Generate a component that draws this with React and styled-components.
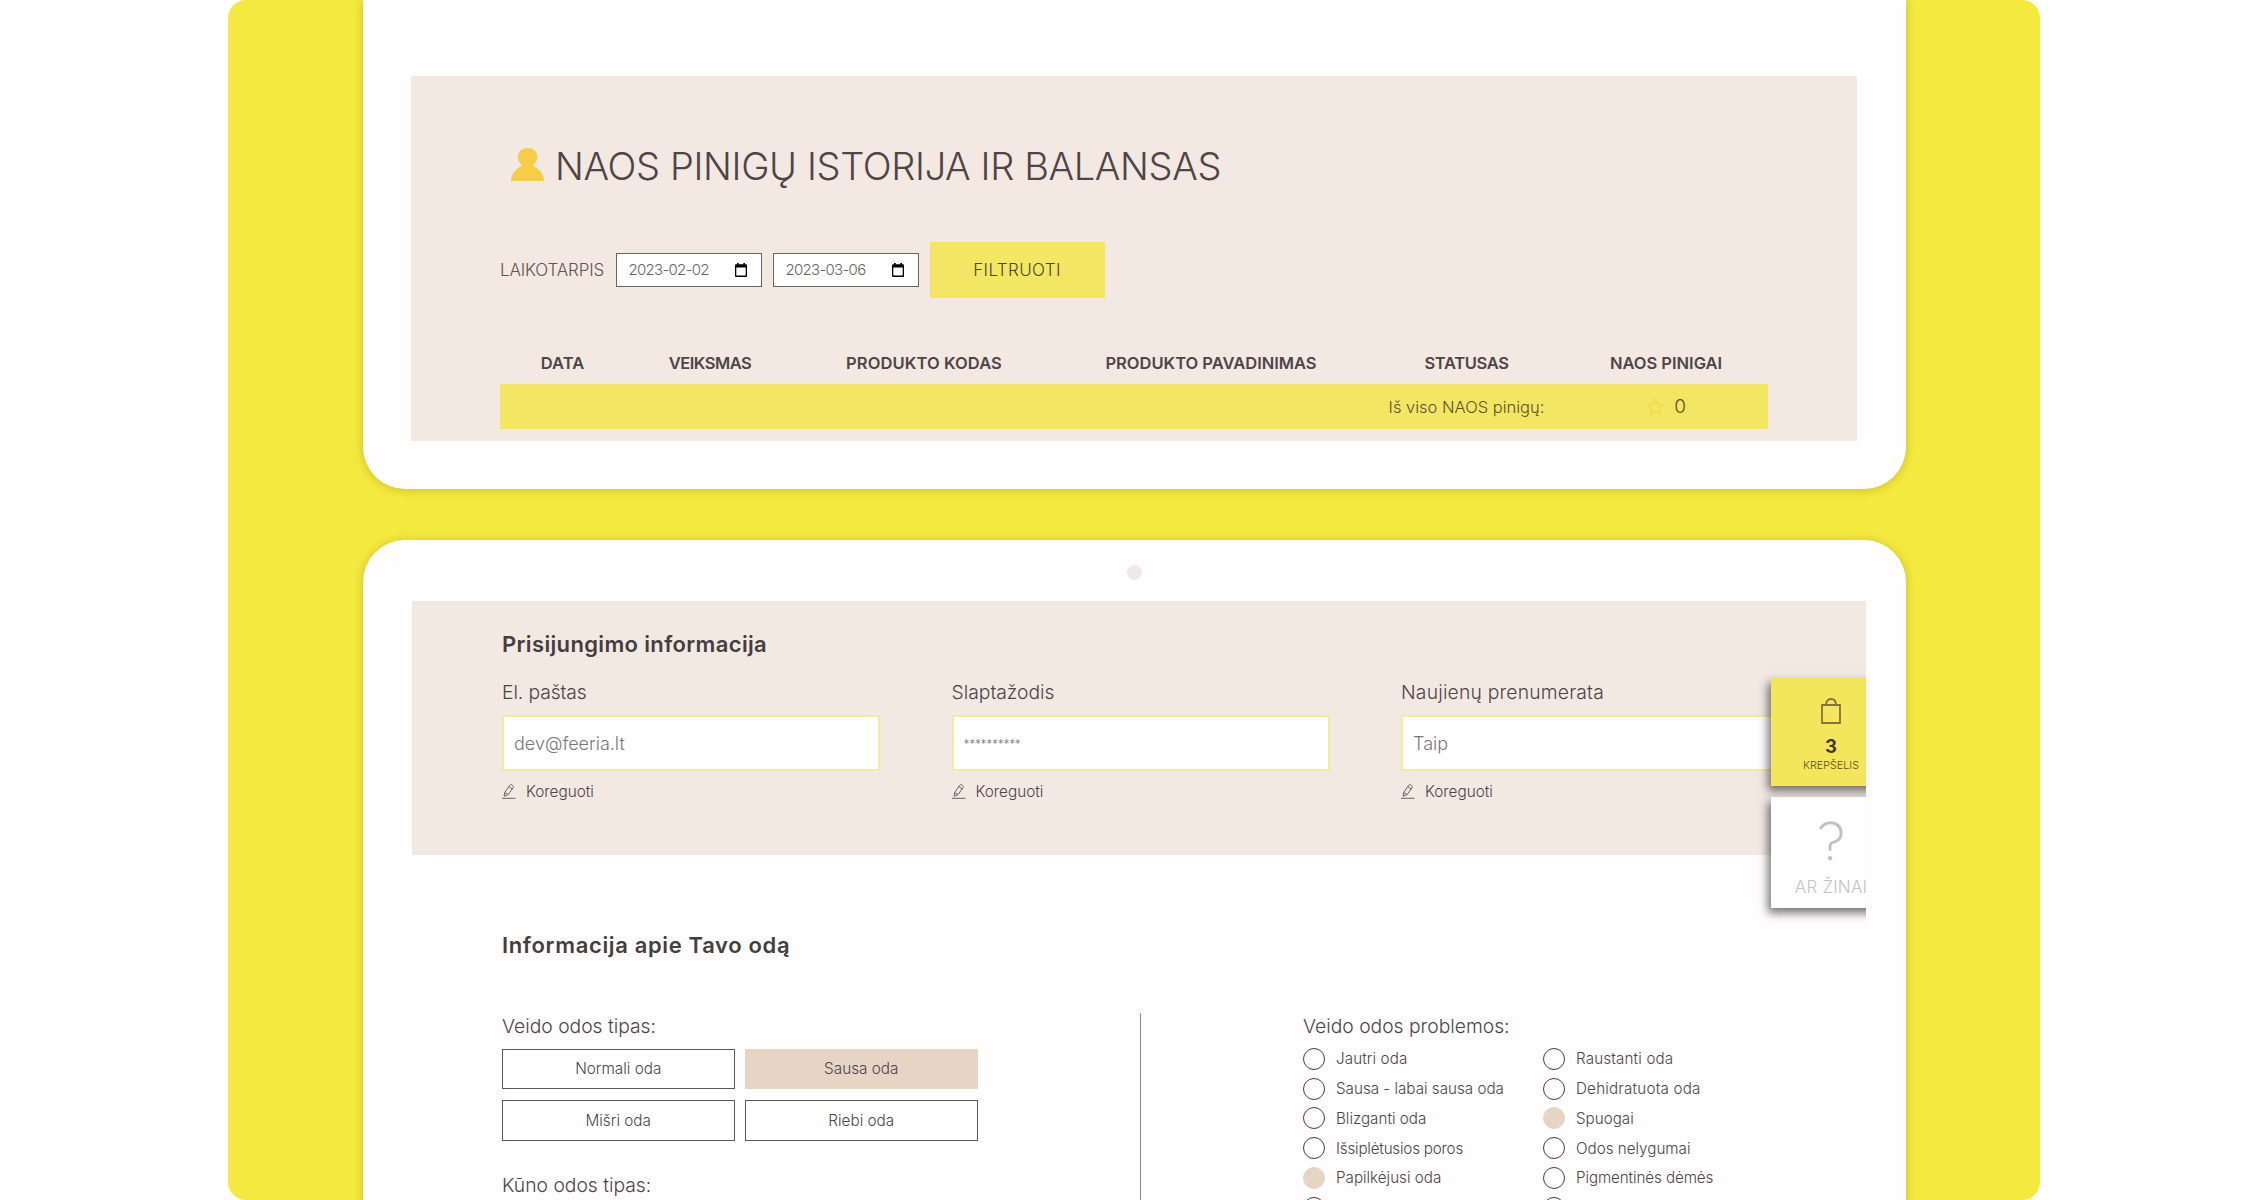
import styled, { createGlobalStyle } from "styled-components";

const columns = [
  { label: "DATA", track: 0 },
  { label: "VEIKSMAS", track: -0.5 },
  { label: "PRODUKTO KODAS", track: 0.1 },
  { label: "PRODUKTO PAVADINIMAS", track: 0 },
  { label: "STATUSAS", track: -0.35 },
  { label: "NAOS PINIGAI", track: 0 },
];

const dates = ["2023-02-02", "2023-03-06"];

const loginFields = [
  { label: "El. paštas", value: "dev@feeria.lt", track: -0.1 },
  { label: "Slaptažodis", value: "**********", masked: true },
  { label: "Naujienų prenumerata", value: "Taip", track: 0.2 },
];

const skinTypes = [
  { label: "Normali oda" },
  { label: "Sausa oda", active: true },
  { label: "Mišri oda" },
  { label: "Riebi oda" },
];

const problems = [
  { label: "Jautri oda", track: 0.1 },
  { label: "Raustanti oda", track: 0.15 },
  { label: "Sausa - labai sausa oda" },
  { label: "Dehidratuota oda", track: 0.2 },
  { label: "Blizganti oda" },
  { label: "Spuogai", active: true },
  { label: "Išsiplėtusios poros", track: -0.2 },
  { label: "Odos nelygumai" },
  { label: "Papilkėjusi oda", active: true },
  { label: "Pigmentinės dėmės", track: -0.1 },
  { label: "" },
  { label: "" },
];

const UserIcon = () => (
  <svg width="33" height="33" viewBox="0 0 33 33" fill="#f5cd47">
    <path d="M16.5 0C10.600 0 6.800 3.800 6.800 9c0 2.800 1.200 5.200 3 7.200.9 1.200.5 2-.9 2.900C3.500 22.300.2 27 0 33h33c-.2-6-3.500-10.700-8.900-13.900-1.400-.9-1.800-1.700-.9-2.900 1.800-2 3-4.400 3-7.200C26.200 3.800 22.400 0 16.500 0z" />
  </svg>
);

const CalendarIcon = () => (
  <svg width="12" height="14" viewBox="0 0 12 14">
    <path d="M2 0h1.700v1.300h4.600V0H10v1.300h.8c.7 0 1.200.5 1.200 1.200v10.200c0 .7-.5 1.300-1.200 1.300H1.200C.5 14 0 13.400 0 12.700V2.500c0-.7.5-1.200 1.200-1.200H2V0zM1.300 4.600v8h9.400v-8H1.300z" />
  </svg>
);

const StarIcon = () => (
  <svg width="19" height="19" viewBox="0 0 24 24" fill="none" stroke="#f4d84e" strokeWidth="2">
    <path d="M12 2.500l2.900 6.400 7 .8-5.200 4.700 1.400 6.900-6.100-3.500-6.100 3.500 1.400-6.900L2.100 9.700l7-.8z" />
  </svg>
);

const PencilIcon = () => (
  <svg width="14" height="15" viewBox="0 0 14 15" fill="none" stroke="#6b6262" strokeWidth="1">
    <path d="M2.200 12.200l.5-3.700L7.700 1.300c.5-.7 1.300-.9 2-.4l1.100.8c.7.5.8 1.300.3 2L6.100 10.600l-3.900 1.600zM6.900 2.600l3.300 2.400M2.700 8.500l3.400 2.100M0 14.300h13.500" />
  </svg>
);

const BagIcon = () => (
  <svg width="20" height="26" viewBox="0 0 20 26" fill="none" stroke="#857439" strokeWidth="1.8">
    <path d="M1 7h18v18H1zM5 7c0-3.800 2-6 5-6s5 2.200 5 6" />
  </svg>
);

const QuestionIcon = () => (
  <svg width="24" height="40" viewBox="0 0 24 40" fill="none" stroke="#c3bfc2" strokeWidth="3" strokeLinecap="round">
    <path d="M2 7C4 3.500 7.500 1.700 11.500 1.700c6 0 10.700 4.300 10.700 10 0 5.800-3.700 8.600-8 9.700-2.200.6-3.200 1.600-3.200 3.800v3.300" />
    <circle cx="11" cy="37.300" r="2.200" fill="#c3bfc2" stroke="none" />
  </svg>
);

const App = () => {
  return (
    <>
      <GlobalStyle />
      <Stage>
        <TopTablet>
          <HistoryPanel>
            <TitleRow>
              <UserIcon />
              <Title>NAOS PINIGŲ ISTORIJA IR BALANSAS</Title>
            </TitleRow>
            <FilterRow>
              <FilterLabel>LAIKOTARPIS</FilterLabel>
              {dates.map((date) => (
                <DateField key={date}>
                  {date}
                  <CalendarIcon />
                </DateField>
              ))}
              <FilterButton>FILTRUOTI</FilterButton>
            </FilterRow>
            <TableHead>
              {columns.map((col) => (
                <HeadCell key={col.label} $track={col.track}>
                  {col.label}
                </HeadCell>
              ))}
            </TableHead>
            <TotalRow>
              <TotalLabel>Iš viso NAOS pinigų:</TotalLabel>
              <TotalValue>
                <StarIcon />0
              </TotalValue>
            </TotalRow>
          </HistoryPanel>
        </TopTablet>

        <BottomTablet>
          <Camera />
          <Screen>
            <LoginPanel>
              <SectionTitle $track={0.35}>Prisijungimo informacija</SectionTitle>
              <Fields>
                {loginFields.map((field) => (
                  <div key={field.label}>
                    <Label $track={field.track}>{field.label}</Label>
                    <Input $masked={field.masked}>{field.value}</Input>
                    <EditLink>
                      <PencilIcon />
                      Koreguoti
                    </EditLink>
                  </div>
                ))}
              </Fields>
            </LoginPanel>

            <SkinSection>
              <SectionTitle $track={0.65}>Informacija apie Tavo odą</SectionTitle>
              <SkinBody>
                <SkinTypes>
                  <Label>Veido odos tipas:</Label>
                  <TypeGrid>
                    {skinTypes.map((type) => (
                      <TypeButton key={type.label} $active={type.active}>
                        {type.label}
                      </TypeButton>
                    ))}
                  </TypeGrid>
                  <Label>Kūno odos tipas:</Label>
                </SkinTypes>
                <Problems>
                  <Label>Veido odos problemos:</Label>
                  <ProblemGrid>
                    {problems.map((problem, index) => (
                      <Problem key={index} $track={problem.track}>
                        <Radio $active={problem.active} />
                        {problem.label}
                      </Problem>
                    ))}
                  </ProblemGrid>
                </Problems>
              </SkinBody>
            </SkinSection>

            <SideWidgets>
              <CartCard>
                <BagIcon />
                <CartCount>3</CartCount>
                <CartLabel>KREPŠELIS</CartLabel>
              </CartCard>
              <HelpCard>
                <QuestionIcon />
                <HelpLabel>AR ŽINAI</HelpLabel>
              </HelpCard>
            </SideWidgets>
          </Screen>
        </BottomTablet>
      </Stage>
    </>
  );
};

export default App;

// styled components
const GlobalStyle = createGlobalStyle`
  * {
    box-sizing: border-box;
  }
  body {
    margin: 0;
    background: #fff;
    color: #4d4547;
    font-family: Inter, "Liberation Sans", sans-serif;
    font-weight: 300;
    overflow: hidden;
  }
  svg {
    display: block;
    flex-shrink: 0;
  }
`

const Stage = styled.main`
  width: 1812px;
  height: 1200px;
  margin-left: 228px;
  padding: 0 135px;
  border-radius: 18px;
  background: #f4e93e;
  overflow: hidden;
`

const Tablet = styled.section`
  width: 1543px;
  background: #fffdfe;
  box-shadow: 0 1px 10px rgba(110, 110, 0, 0.32);
`

const TopTablet = styled(Tablet)`
  height: 489px;
  padding: 76px 0 0 48px;
  border-radius: 0 0 42px 42px;
`

const BottomTablet = styled(Tablet)`
  height: 760px;
  margin-top: 51px;
  padding: 25px 0 0 49px;
  border-radius: 42px 42px 0 0;
`

const HistoryPanel = styled.div`
  width: 1446px;
  height: 365px;
  padding: 64px 89px 0;
  background: #f3e9e2;
`

const TitleRow = styled.div`
  display: flex;
  align-items: center;
  gap: 11px;
  height: 49px;
  padding-left: 11px;
`

const Title = styled.h1`
  margin: 0;
  padding-top: 2px;
  font-size: 38px;
  font-weight: 300;
  line-height: 48px;
  letter-spacing: -0.37px;
  white-space: nowrap;
`

const FilterRow = styled.div`
  display: flex;
  align-items: center;
  gap: 11px;
  height: 55.5px;
  margin-top: 53px;
`

const FilterLabel = styled.span`
  width: 104.5px;
  padding-top: 1px;
  font-size: 17px;
  letter-spacing: -0.15px;
  color: #5f5553;
`

const DateField = styled.div`
  display: flex;
  align-items: center;
  justify-content: space-between;
  width: 146px;
  height: 34px;
  padding: 0 14px 0 12px;
  border: 1.5px solid #6b665e;
  background: #fff;
  color: #6a6361;
  font-size: 15px;
  letter-spacing: -0.7px;
`

const FilterButton = styled.button`
  width: 175px;
  height: 55.5px;
  padding: 1px 0 0;
  border: 0;
  background: #f3e662;
  color: #4f4633;
  font: inherit;
  font-size: 17px;
  letter-spacing: 0.4px;
`

const TableHead = styled.div`
  display: grid;
  grid-template-columns: 125px 170px 258px 316px 195px 204px;
  height: 43px;
  margin-top: 43px;
`

const HeadCell = styled.span`
  font-size: 16.5px;
  font-weight: 600;
  line-height: 44px;
  letter-spacing: ${({ $track }) => $track || 0}px;
  text-align: center;
`

const TotalRow = styled(TableHead)`
  height: 45.5px;
  margin-top: 0;
  background: #f3e662;
  color: #5c5230;
  line-height: 46px;
  text-align: center;
`

const TotalLabel = styled.span`
  grid-column: 5;
  font-size: 16.5px;
`

const TotalValue = styled.span`
  display: flex;
  align-items: center;
  justify-content: center;
  gap: 9px;
  font-size: 19px;
`

const Camera = styled.div`
  width: 15px;
  height: 15px;
  margin: 0 0 21px 715px;
  border-radius: 50%;
  background: #ebe9ed;
`

const Screen = styled.div`
  position: relative;
  width: 1454px;
  height: 660px;
  overflow: hidden;
`

const LoginPanel = styled.div`
  height: 254px;
  padding: 29px 0 0 90px;
  background: #f2e9e3;
`

const SectionTitle = styled.h2`
  margin: 0;
  font-size: 22px;
  font-weight: 600;
  line-height: 28px;
  letter-spacing: ${({ $track }) => $track}px;
  color: #463d3f;
`

const Fields = styled.div`
  display: grid;
  grid-template-columns: repeat(3, 378px);
  gap: 71.5px;
  margin-top: 21px;
`

const Label = styled.div`
  font-size: 19.3px;
  line-height: 26px;
  letter-spacing: ${({ $track }) => $track || 0}px;
`

const Input = styled.div`
  height: 56px;
  margin: 9.5px 0 11px;
  padding-left: 10px;
  border: 2px solid #f3ec9c;
  background: #fff;
  color: #7d7678;
  font-size: ${({ $masked }) => ($masked ? 12 : 18)}px;
  letter-spacing: ${({ $masked }) => ($masked ? -0.3 : 0)}px;
  line-height: 54px;
`

const EditLink = styled.div`
  display: flex;
  align-items: center;
  gap: 10px;
  font-size: 15.3px;
  line-height: 20px;
`

const SkinSection = styled.div`
  padding: 75.5px 0 0 90px;
`

const SkinBody = styled.div`
  display: flex;
  margin-top: 54.5px;
`

const SkinTypes = styled.div`
  width: 639px;
  height: 240px;
  border-right: 1px solid #8d8a8d;
`

const TypeGrid = styled.div`
  display: grid;
  grid-template-columns: 232.5px 232.5px;
  grid-auto-rows: 40.5px;
  gap: 11px 10.5px;
  margin: 9.5px 0 31.5px;
`

const TypeButton = styled.button`
  padding: 0;
  border: 1.5px solid ${({ $active }) => ($active ? "#e6d5c5" : "#5c575c")};
  background: ${({ $active }) => ($active ? "#e6d5c5" : "#fff")};
  color: inherit;
  font: inherit;
  font-size: 15.3px;
`

const Problems = styled.div`
  padding-left: 162px;
`

const ProblemGrid = styled.div`
  display: grid;
  grid-template-columns: 240px 240px;
  grid-auto-rows: 29.75px;
  margin-top: 5px;
`

const Problem = styled.div`
  display: flex;
  align-items: center;
  gap: 11px;
  font-size: 15.2px;
  letter-spacing: ${({ $track }) => $track || 0}px;
`

const Radio = styled.span`
  width: 22px;
  height: 22px;
  border: 1.5px solid ${({ $active }) => ($active ? "#e6d5c5" : "#443e44")};
  border-radius: 50%;
  background: ${({ $active }) => ($active ? "#e6d5c5" : "#fff")};
`

// cards stuck to the right edge of the screen, cut off by it
const SideWidgets = styled.aside`
  position: absolute;
  top: 77px;
  right: -25px;
  display: flex;
  flex-direction: column;
  gap: 11px;
  width: 120px;
`

const SideCard = styled.div`
  display: flex;
  flex-direction: column;
  align-items: center;
  box-shadow: -3px 5px 9px rgba(40, 38, 40, 0.65);
`

const CartCard = styled(SideCard)`
  height: 108px;
  padding-top: 20px;
  background: #f3e65c;
`

const CartCount = styled.strong`
  margin-top: 11px;
  font-size: 18.5px;
  font-weight: 700;
  line-height: 22px;
  color: #43391f;
`

const CartLabel = styled.span`
  margin-top: 1px;
  font-size: 10.8px;
  line-height: 16px;
  color: #594e28;
`

const HelpCard = styled(SideCard)`
  height: 111px;
  padding-top: 24px;
  background: #fff;
`

const HelpLabel = styled.span`
  margin-top: 15px;
  font-size: 17px;
  line-height: 22px;
  letter-spacing: 0.2px;
  color: #c5c1c6;
`
